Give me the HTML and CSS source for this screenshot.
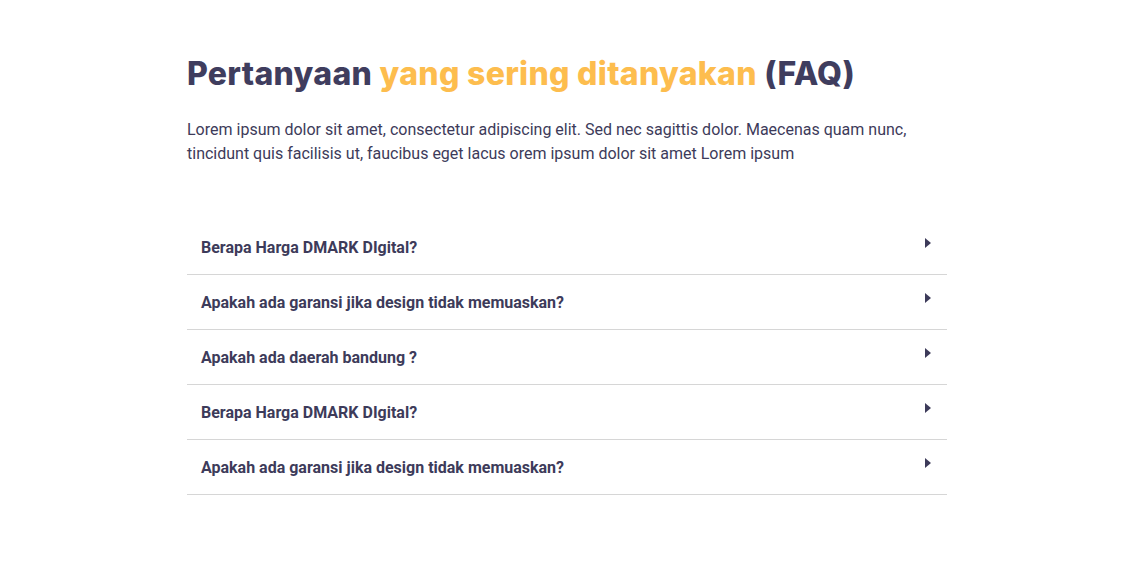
FILE: index.html
```html
<!DOCTYPE html>
<html lang="id">
<head>
<meta charset="utf-8">
<title>FAQ</title>
<link rel="stylesheet" href="styles.css">
</head>
<body>
<section class="faq">
  <h1 class="faq-title">Pertanyaan <span class="accent">yang sering ditanyakan</span> (FAQ)</h1>
  <p class="faq-intro">Lorem ipsum dolor sit amet, consectetur adipiscing elit. Sed nec sagittis dolor. Maecenas quam nunc, tincidunt quis facilisis ut, faucibus eget lacus orem ipsum dolor sit amet Lorem ipsum</p>
  <div class="faq-list">
    <div class="faq-item"><span class="q">Berapa Harga DMARK DIgital?</span><span class="arrow"></span></div>
    <div class="faq-item"><span class="q">Apakah ada garansi jika design tidak memuaskan?</span><span class="arrow"></span></div>
    <div class="faq-item"><span class="q">Apakah ada daerah bandung ?</span><span class="arrow"></span></div>
    <div class="faq-item"><span class="q">Berapa Harga DMARK DIgital?</span><span class="arrow"></span></div>
    <div class="faq-item"><span class="q">Apakah ada garansi jika design tidak memuaskan?</span><span class="arrow"></span></div>
  </div>
</section>
</body>
</html>
```

FILE: styles.css
```css
html, body {
  margin: 0;
  padding: 0;
  background: #fff;
}
body {
  font-family: Roboto, "Liberation Sans", sans-serif;
  color: #3d3b5a;
}
.faq {
  width: 760px;
  margin: 0 auto 0 187px;
  padding-top: 52px;
}
.faq-title {
  margin: 0;
  font-family: Inter, "Open Sans", sans-serif;
  font-weight: 800;
  font-size: 32px;
  line-height: 44px;
  color: #3f3d5e;
  letter-spacing: 0.3px;
}
.accent {
  color: #fdbd4e;
}
.faq-intro {
  margin: 22px 0 0;
  font-size: 16px;
  line-height: 24px;
  color: #3d3b5a;
  width: 740px;
}
.faq-list {
  margin-top: 54px;
}
.faq-item {
  display: flex;
  justify-content: space-between;
  align-items: center;
  height: 54px;
  padding: 0 16px 0 14px;
  border-bottom: 1px solid #d6d6d6;
}
.q {
  font-weight: 700;
  font-size: 16px;
  color: #3d3b5a;
  padding-top: 1px;
}
.arrow {
  width: 0;
  height: 0;
  border-top: 5px solid transparent;
  border-bottom: 5px solid transparent;
  border-left: 6px solid #3d3b5a;
  margin-top: -9px;
}
```
